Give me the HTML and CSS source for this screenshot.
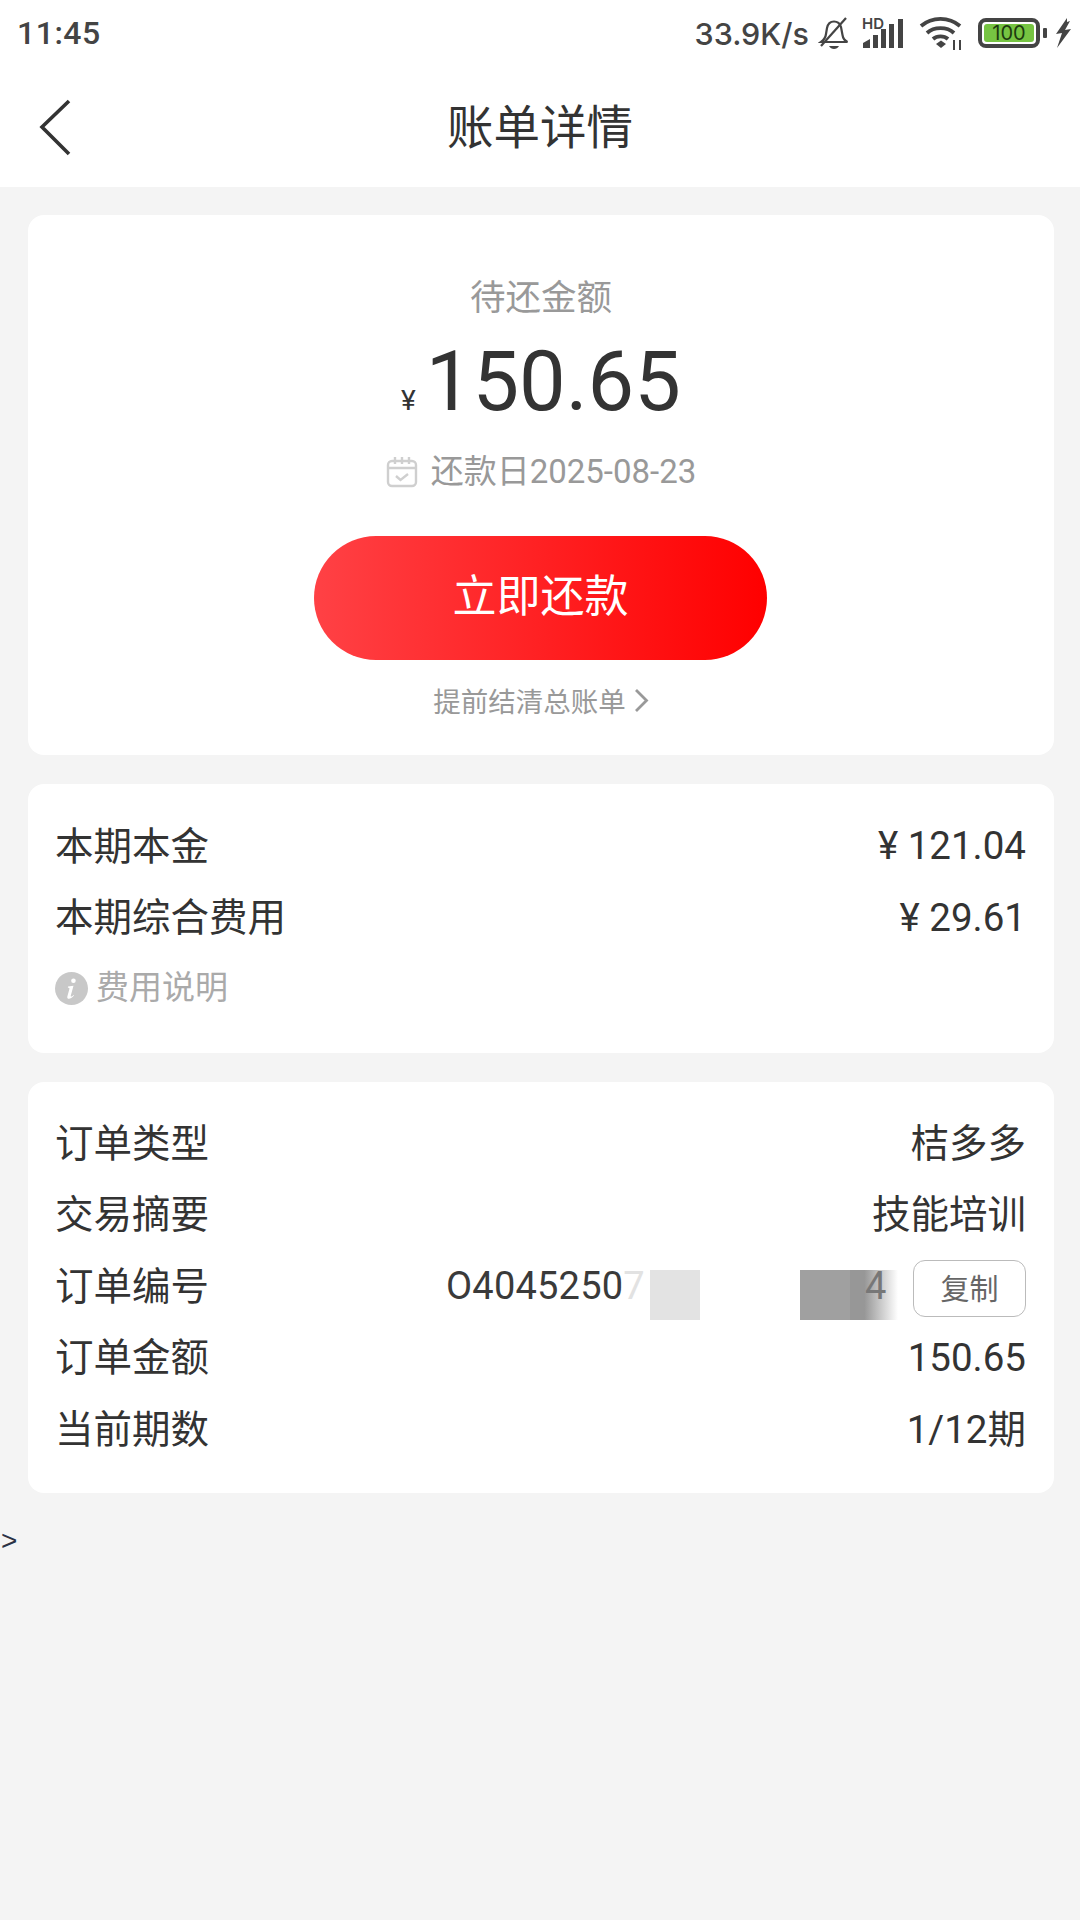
FILE: index.html
```html
<!DOCTYPE html>
<html lang="zh-CN">
<head>
<meta charset="UTF-8">
<meta name="viewport" content="width=device-width, initial-scale=1.0">
<title>账单详情</title>
<link rel="stylesheet" href="styles.css">
</head>
<body>
<div class="top">
    <div class="status-bar">
        <span class="time">11:45</span>
        <div class="status-right">
            <span class="speed">33.9K/s</span>
            <svg class="ic-bell" width="32" height="34" viewBox="0 0 32 34" fill="none" stroke="#444" stroke-width="2.2">
                <path d="M3 26c3-2 4.500-4 5-8l1-6c.8-4 3.500-6.500 7-6.500s6 2.200 7 5.500l1.500 8c.5 3.500 2 5.500 5 7z"/>
                <path d="M3 30L28 2"/>
                <path d="M11 30h10c-1 2-3 3-5 3s-4-1-5-3z" fill="#444" stroke="none"/>
            </svg>
            <svg class="ic-signal" width="42" height="42" viewBox="0 -12 42 42">
                <text class="hd" x="0" y="11">HD</text>
                <path d="M1 30v-5l7-4v9z" fill="#444"/>
                <rect x="11" y="17" width="5" height="13" fill="#444"/>
                <rect x="19" y="11" width="5" height="19" fill="#444"/>
                <rect x="27" y="6" width="5" height="24" fill="#444"/>
                <rect x="36" y="1" width="5" height="29" fill="#444"/>
            </svg>
            <svg class="ic-wifi" width="44" height="34" viewBox="0 0 44 34" fill="none" stroke="#444" stroke-width="3.8">
                <path d="M2 10c11-9.500 28-9.500 39 0"/>
                <path d="M8 17c7-6.500 20-6.500 27 0"/>
                <path d="M14 23c4-3.500 11-3.500 15 0"/>
                <path d="M17 28l5-3.500 5 3.500-5 4z" fill="#444" stroke="none"/>
                <path d="M35 24v10M41 24v10" stroke-width="2"/>
            </svg>
            <div class="battery">
                <div class="battery-level">100</div>
            </div>
            <span class="battery-cap"></span>
            <svg class="ic-bolt" width="17" height="30" viewBox="0 0 17 30">
                <path d="M12 0L1 16l6-1-5 15L16 11l-6 1 5-9-3 1z" fill="#444"/>
            </svg>
        </div>
    </div>
    <div class="title-bar">
        <svg class="back" width="32" height="58" viewBox="0 0 32 58" fill="none" stroke="#333" stroke-width="3.6">
            <path d="M30 2L3 28l27 27"/>
        </svg>
        <h1>账单详情</h1>
    </div>
</div>

<div class="content">
    <div class="card summary">
        <p class="summary-label">待还金额</p>
        <p class="amount"><span class="yen">¥</span>150.65</p>
        <p class="due">
            <svg width="32" height="32" viewBox="0 0 32 32" fill="none" stroke="#cfcfcf" stroke-width="2.4">
                <rect x="2" y="5" width="28" height="25" rx="4"/>
                <path d="M2 12h28M9 1v7M16 1v7M23 1v7"/>
                <path d="M10 20l4.500 4 7.500-6"/>
            </svg>
            <span>还款日2025-08-23</span>
        </p>
        <button class="pay-btn">立即还款</button>
        <p class="settle">提前结清总账单
            <svg width="15" height="25" viewBox="0 0 15 25" fill="none" stroke="#999" stroke-width="2.8">
                <path d="M2 2l10.500 10.500L2 23"/>
            </svg>
        </p>
    </div>

    <div class="card fees">
        <div class="row"><span class="cjk">本期本金</span><span>¥ 121.04</span></div>
        <div class="row"><span class="cjk">本期综合费用</span><span>¥ 29.61</span></div>
        <div class="fee-note">
            <svg width="33" height="33" viewBox="0 0 33 33">
                <circle cx="16.500" cy="16.500" r="16.500" fill="#c8c8c8"/>
                <path d="M18.500 6.500a2.300 2.300 0 1 1-.1 4.600 2.300 2.300 0 0 1 .1-4.600zM13 14.500l5.500-.8-2.800 10.300c0 1 1.200.6 2.800-1l.5.600c-2 2.400-3.700 3.200-5 3.200-1.600 0-2-1.200-1.600-2.600l2-7.300c.2-1-.4-1.200-1.500-1.200z" fill="#fff"/>
            </svg>
            <span class="cjk">费用说明</span>
        </div>
    </div>

    <div class="card order">
        <div class="row"><span class="cjk">订单类型</span><span class="cjk">桔多多</span></div>
        <div class="row"><span class="cjk">交易摘要</span><span class="cjk">技能培训</span></div>
        <div class="row order-no">
            <span class="cjk">订单编号</span>
            <span class="order-code">O4045250<span class="faded">7</span></span>
            <span class="mask mask-light"></span>
            <span class="mask mask-dark"></span>
            <span class="mask mask-fade"></span>
            <span class="order-tail">4</span>
            <button class="copy-btn">复制</button>
        </div>
        <div class="row"><span class="cjk">订单金额</span><span>150.65</span></div>
        <div class="row"><span class="cjk">当前期数</span><span class="cjk">1/12期</span></div>
    </div>

    <div class="stray">&gt;</div>
</div>
</body>
</html>
```

FILE: styles.css
```css
body {
    font-family: Roboto, "Noto Sans CJK SC", sans-serif;
    background-color: #f4f4f4;
    color: #333;
    margin: 0;
    padding: 0;
    width: 1080px;
    height: 1920px;
    overflow: hidden;
}
p, h1 {
    margin: 0;
    font-weight: 400;
}

.top {
    background-color: #fff;
    height: 187px;
}
.status-bar {
    height: 66px;
    display: flex;
    justify-content: space-between;
    align-items: center;
    padding: 0 8px 0 17px;
    color: #444;
}
.time {
    font-size: 32px;
    font-weight: 500;
    letter-spacing: .5px;
}
.status-right {
    display: flex;
    align-items: center;
}
.speed {
    font-family: Inter, sans-serif;
    font-size: 30.5px;
    font-weight: 500;
    margin-right: 9px;
}
.ic-signal {
    margin-left: 12px;
    margin-bottom: 12px;
}
.ic-wifi {
    margin-left: 15px;
}
.hd {
    font-family: Inter, sans-serif;
    font-size: 15px;
    font-weight: 600;
    fill: #444;
}
.battery {
    margin-left: 15px;
    width: 62px;
    height: 30px;
    box-sizing: border-box;
    border: 4px solid #444;
    border-radius: 8px;
    padding: 2px;
    display: flex;
}
.battery-level {
    flex: 1;
    background-color: #76c442;
    border-radius: 3px;
    color: #1d3a10;
    font-family: Inter, sans-serif;
    font-size: 20px;
    line-height: 18px;
    text-align: center;
}
.battery-cap {
    width: 4px;
    height: 10px;
    margin-left: 3px;
    background-color: #444;
    border-radius: 1px;
}
.ic-bolt {
    margin-left: 8px;
}

.title-bar {
    height: 121px;
    position: relative;
    display: flex;
    justify-content: center;
    align-items: center;
}
.title-bar h1 {
    font-size: 46.500px;
    line-height: 117px;
    padding-top: 4px;
    color: #333;
}
.back {
    position: absolute;
    left: 39px;
    top: 33px;
}

.content {
    padding: 28px 26px 0 28px;
    display: flex;
    flex-direction: column;
    gap: 29px;
}
.card {
    background-color: #fff;
    border-radius: 16px;
    box-sizing: border-box;
    width: 1026px;
}

.summary {
    height: 540px;
    padding-top: 58px;
    display: flex;
    flex-direction: column;
    align-items: center;
}
.summary-label {
    font-size: 35.500px;
    line-height: 50px;
    color: #999;
}
.amount {
    margin-top: 9px;
    height: 100px;
    font-size: 83px;
    line-height: 100px;
    display: flex;
    align-items: baseline;
}
.yen {
    font-size: 28px;
    margin-right: 10px;
    color: #333;
}
.due {
    margin-top: 20px;
    height: 40px;
    display: flex;
    align-items: center;
    gap: 13px;
    font-size: 33px;
    color: #999;
}
.due span {
    margin-bottom: 6px;
}
.pay-btn {
    margin-top: 44px;
    margin-right: 1px;
    width: 453px;
    height: 124px;
    flex-shrink: 0;
    border: none;
    border-radius: 62px;
    background: linear-gradient(to right, #ff4145, #ff0000);
    color: #fff;
    font-family: inherit;
    font-size: 44px;
    padding: 0 0 10px;
}
.settle {
    margin-top: 20px;
    height: 40px;
    display: flex;
    align-items: center;
    gap: 8px;
    font-size: 27.500px;
    color: #999;
}

.row {
    height: 71.5px;
    display: flex;
    justify-content: space-between;
    align-items: center;
    font-size: 38.500px;
    padding: 0 28px 0 27px;
}
.cjk {
    margin-bottom: 6px;
}
.fees {
    height: 269px;
    padding-top: 26px;
}
.fee-note {
    height: 70px;
    padding: 0 28px 0 27px;
    display: flex;
    align-items: center;
    gap: 8px;
    font-size: 33px;
    color: #aaa;
}

.order {
    height: 411px;
    padding-top: 25px;
}
.order-no {
    position: relative;
    justify-content: flex-start;
}
.order-code {
    margin-left: 237px;
    font-size: 38px;
    letter-spacing: .2px;
    color: #3a3a3a;
}
.faded {
    color: #e2e2e2;
}
.order-tail {
    position: absolute;
    left: 837px;
    font-size: 38px;
    color: #777;
}
.mask {
    position: absolute;
    top: 20px;
    height: 50px;
}
.mask-light {
    left: 622px;
    width: 50px;
    background-color: #e3e3e3;
}
.mask-dark {
    left: 772px;
    width: 50px;
    background-color: #a0a0a0;
}
.mask-fade {
    left: 822px;
    width: 48px;
    background: linear-gradient(to right, #979797, #979797 30%, #fff);
}
.copy-btn {
    margin-left: auto;
    margin-top: 6px;
    width: 113px;
    height: 57px;
    box-sizing: border-box;
    background-color: #fff;
    border: 1px solid #bbb;
    border-radius: 12px;
    color: #666;
    font-family: inherit;
    font-size: 29px;
    padding: 0 0 4px;
    position: relative;
}

.stray {
    margin: 4px 0 0 -27px;
    font-family: "Liberation Sans", sans-serif;
    font-size: 28px;
    line-height: 30px;
    color: #2b3245;
}
```
